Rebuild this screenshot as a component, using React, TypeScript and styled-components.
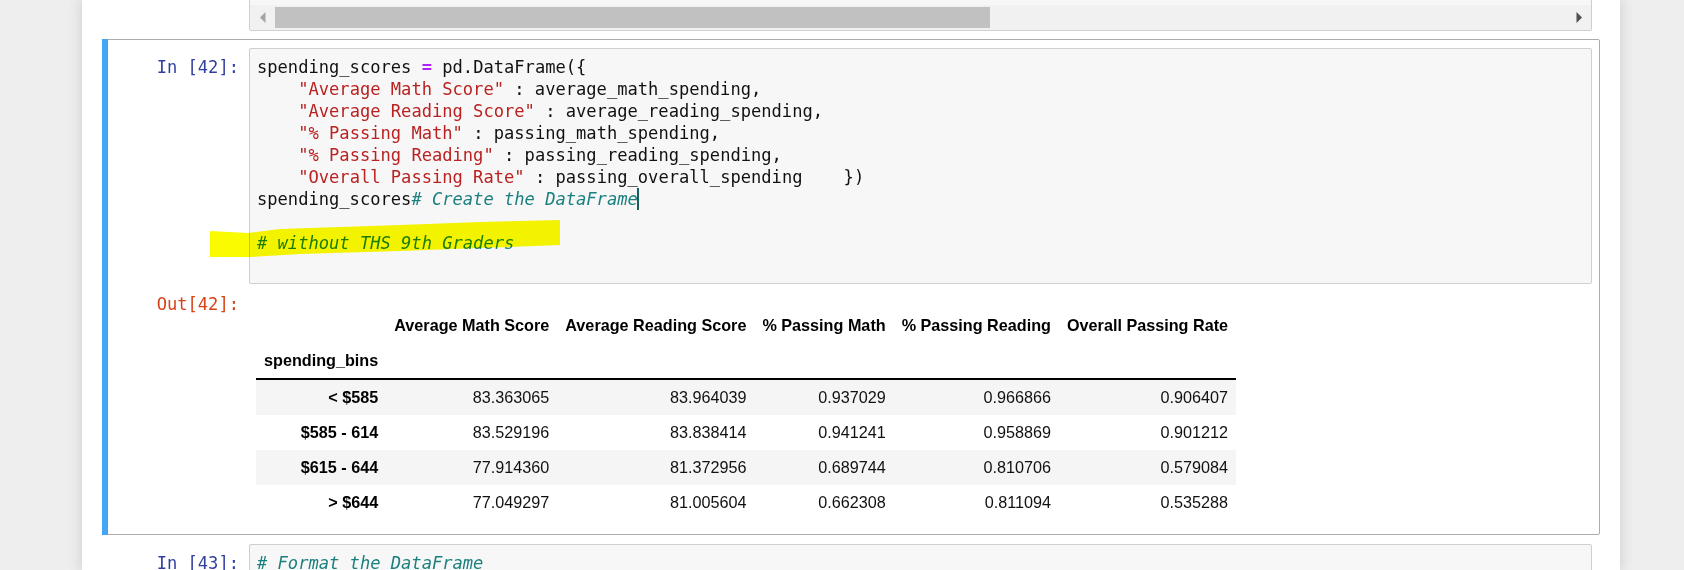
import React from "react";
import styled, { createGlobalStyle, css } from "styled-components";

const GlobalStyle = createGlobalStyle`
  html, body {
    margin: 0;
    padding: 0;
    background: #eeeeee;
    overflow: hidden;
  }
  #root {
    height: 570px;
    overflow: hidden;
  }
`;

const MONO = `"DejaVu Sans Mono", "Liberation Mono", monospace`;

const Page = styled.div`
  display: flex;
  padding-left: 82px;
  height: 570px;
`;

const NotebookContainer = styled.div`
  width: 1538px;
  box-sizing: border-box;
  padding: 0 20px;
  background: #ffffff;
  box-shadow: 0 0 12px 1px rgba(87, 87, 87, 0.2);
  display: flex;
  flex-direction: column;
`;

const Cell = styled.div<{ $selected?: boolean; $clipped?: boolean }>`
  position: relative;
  display: flex;
  flex-direction: column;
  border: 1px solid ${(p) => (p.$selected ? "#ababab" : "transparent")};
  border-radius: 2px;
  padding: 8px 7px 7px 6px;
  ${(p) =>
    p.$clipped &&
    css`
      border-top: none;
      padding-top: 0;
    `}
  ${(p) =>
    p.$selected &&
    css`
      &::before {
        content: "";
        position: absolute;
        left: -1px;
        top: -1px;
        bottom: -1px;
        width: 6px;
        background: #42a5f5;
      }
    `}
`;

const Row = styled.div`
  display: flex;
  align-items: flex-start;
`;

const Prompt = styled.div<{ $out?: boolean }>`
  width: 140px;
  flex: none;
  box-sizing: border-box;
  padding: ${(p) => (p.$out ? "9px" : "8px")} 10px 0 0;
  text-align: right;
  font-family: ${MONO};
  font-size: 17.1px;
  line-height: 22px;
  color: ${(p) => (p.$out ? "#d84315" : "#303f9f")};
  white-space: pre;
`;

const InputArea = styled.div<{ $clipped?: boolean }>`
  flex: 1;
  min-width: 0;
  border: 1px solid #cfcfcf;
  border-radius: 2px;
  background: #f7f7f7;
  ${(p) =>
    p.$clipped &&
    css`
      border-top: none;
      border-radius: 0 0 2px 2px;
    `}
`;

const Code = styled.pre`
  margin: 0;
  padding: 7px 8px 7px 7px;
  font-family: ${MONO};
  font-size: 17.1px;
  line-height: 22px;
  color: #111;
  white-space: pre;
`;

const Str = styled.span`
  color: #ba2121;
`;

const Op = styled.span`
  color: #aa22ff;
  font-weight: bold;
`;

const Comment = styled.span`
  color: #1a7f7f;
  font-style: italic;
`;

const Cursor = styled.span`
  display: inline-block;
  width: 0;
  height: 22px;
  vertical-align: top;
  border-left: 2px solid #1a5c5c;
  margin-left: -1px;
`;

const CodeTail = styled.div`
  height: 5px;
`;

const HScrollbar = styled.div`
  display: flex;
  height: 25px;
  background: #f1f1f1;
`;

const ScrollButton = styled.div`
  width: 25px;
  flex: none;
  display: flex;
  align-items: center;
  justify-content: center;
`;

const ScrollTrack = styled.div`
  flex: 1;
  padding: 2px 0;
  box-sizing: border-box;
  display: flex;
`;

const ScrollThumb = styled.div`
  width: 715px;
  background: #c1c1c1;
`;

const OutputArea = styled.div`
  flex: 1;
  min-width: 0;
  padding: 24px 7px 7px 7px;
`;

const DataTable = styled.table`
  border-collapse: collapse;
  border-spacing: 0;
  border: none;
  font-family: "Liberation Sans", Arial, sans-serif;
  font-size: 16.2px;
  color: #000;

  thead {
    border-bottom: 2px solid #000;
  }

  th,
  td {
    padding: 8px;
    line-height: 19px;
    text-align: right;
    vertical-align: middle;
    white-space: nowrap;
  }

  th {
    font-weight: bold;
  }

  td {
    font-weight: normal;
    color: #111;
  }

  tbody tr:nth-child(odd) {
    background: #f5f5f5;
  }
`;

const Highlight = styled.svg`
  position: absolute;
  left: 107px;
  top: 180px;
  width: 350px;
  height: 40px;
  mix-blend-mode: multiply;
  pointer-events: none;
  z-index: 2;
`;

const columns = [
  "Average Math Score",
  "Average Reading Score",
  "% Passing Math",
  "% Passing Reading",
  "Overall Passing Rate",
];

const rows: { label: string; values: string[] }[] = [
  { label: "< $585", values: ["83.363065", "83.964039", "0.937029", "0.966866", "0.906407"] },
  { label: "$585 - 614", values: ["83.529196", "83.838414", "0.941241", "0.958869", "0.901212"] },
  { label: "$615 - 644", values: ["77.914360", "81.372956", "0.689744", "0.810706", "0.579084"] },
  { label: "> $644", values: ["77.049297", "81.005604", "0.662308", "0.811094", "0.535288"] },
];

export default function App() {
  return (
    <>
      <GlobalStyle />
      <Page>
        <NotebookContainer>
          <Cell $clipped>
            <Row>
              <Prompt />
              <InputArea $clipped>
                <CodeTail />
                <HScrollbar>
                  <ScrollButton>
                    <svg width="6" height="11" viewBox="0 0 6 11">
                      <polygon points="5.5,0 0,5.5 5.5,11" fill="#a3a3a3" />
                    </svg>
                  </ScrollButton>
                  <ScrollTrack>
                    <ScrollThumb />
                  </ScrollTrack>
                  <ScrollButton>
                    <svg width="6" height="11" viewBox="0 0 6 11">
                      <polygon points="0.5,0 6,5.5 0.5,11" fill="#505050" />
                    </svg>
                  </ScrollButton>
                </HScrollbar>
              </InputArea>
            </Row>
          </Cell>

          <Cell $selected>
            <Row>
              <Prompt>In [42]:</Prompt>
              <InputArea>
                <Code>
                  {"spending_scores "}
                  <Op>=</Op>
                  {" pd.DataFrame({\n    "}
                  <Str>"Average Math Score"</Str>
                  {" : average_math_spending,\n    "}
                  <Str>"Average Reading Score"</Str>
                  {" : average_reading_spending,\n    "}
                  <Str>"% Passing Math"</Str>
                  {" : passing_math_spending,\n    "}
                  <Str>"% Passing Reading"</Str>
                  {" : passing_reading_spending,\n    "}
                  <Str>"Overall Passing Rate"</Str>
                  {" : passing_overall_spending    })\nspending_scores"}
                  <Comment># Create the DataFrame</Comment>
                  <Cursor />
                  {"\n\n"}
                  <Comment># without THS 9th Graders</Comment>
                  {"\n "}
                </Code>
              </InputArea>
            </Row>
            <Row>
              <Prompt $out>Out[42]:</Prompt>
              <OutputArea>
                <DataTable>
                  <thead>
                    <tr>
                      <th />
                      {columns.map((c) => (
                        <th key={c}>{c}</th>
                      ))}
                    </tr>
                    <tr>
                      <th>spending_bins</th>
                      {columns.map((c) => (
                        <th key={c} />
                      ))}
                    </tr>
                  </thead>
                  <tbody>
                    {rows.map((r) => (
                      <tr key={r.label}>
                        <th>{r.label}</th>
                        {r.values.map((v, i) => (
                          <td key={i}>{v}</td>
                        ))}
                      </tr>
                    ))}
                  </tbody>
                </DataTable>
              </OutputArea>
            </Row>
            <Highlight viewBox="0 0 350 40">
              <polygon
                points="0,11 38,13 70,9 190,5 270,2 350,0 350,25 270,28 190,31 90,34 40,37 0,37"
                fill="#fbfb00"
              />
            </Highlight>
          </Cell>

          <Cell>
            <Row>
              <Prompt>In [43]:</Prompt>
              <InputArea>
                <Code>
                  <Comment># Format the DataFrame</Comment>
                  {"\n\n\n"}
                </Code>
              </InputArea>
            </Row>
          </Cell>
        </NotebookContainer>
      </Page>
    </>
  );
}
